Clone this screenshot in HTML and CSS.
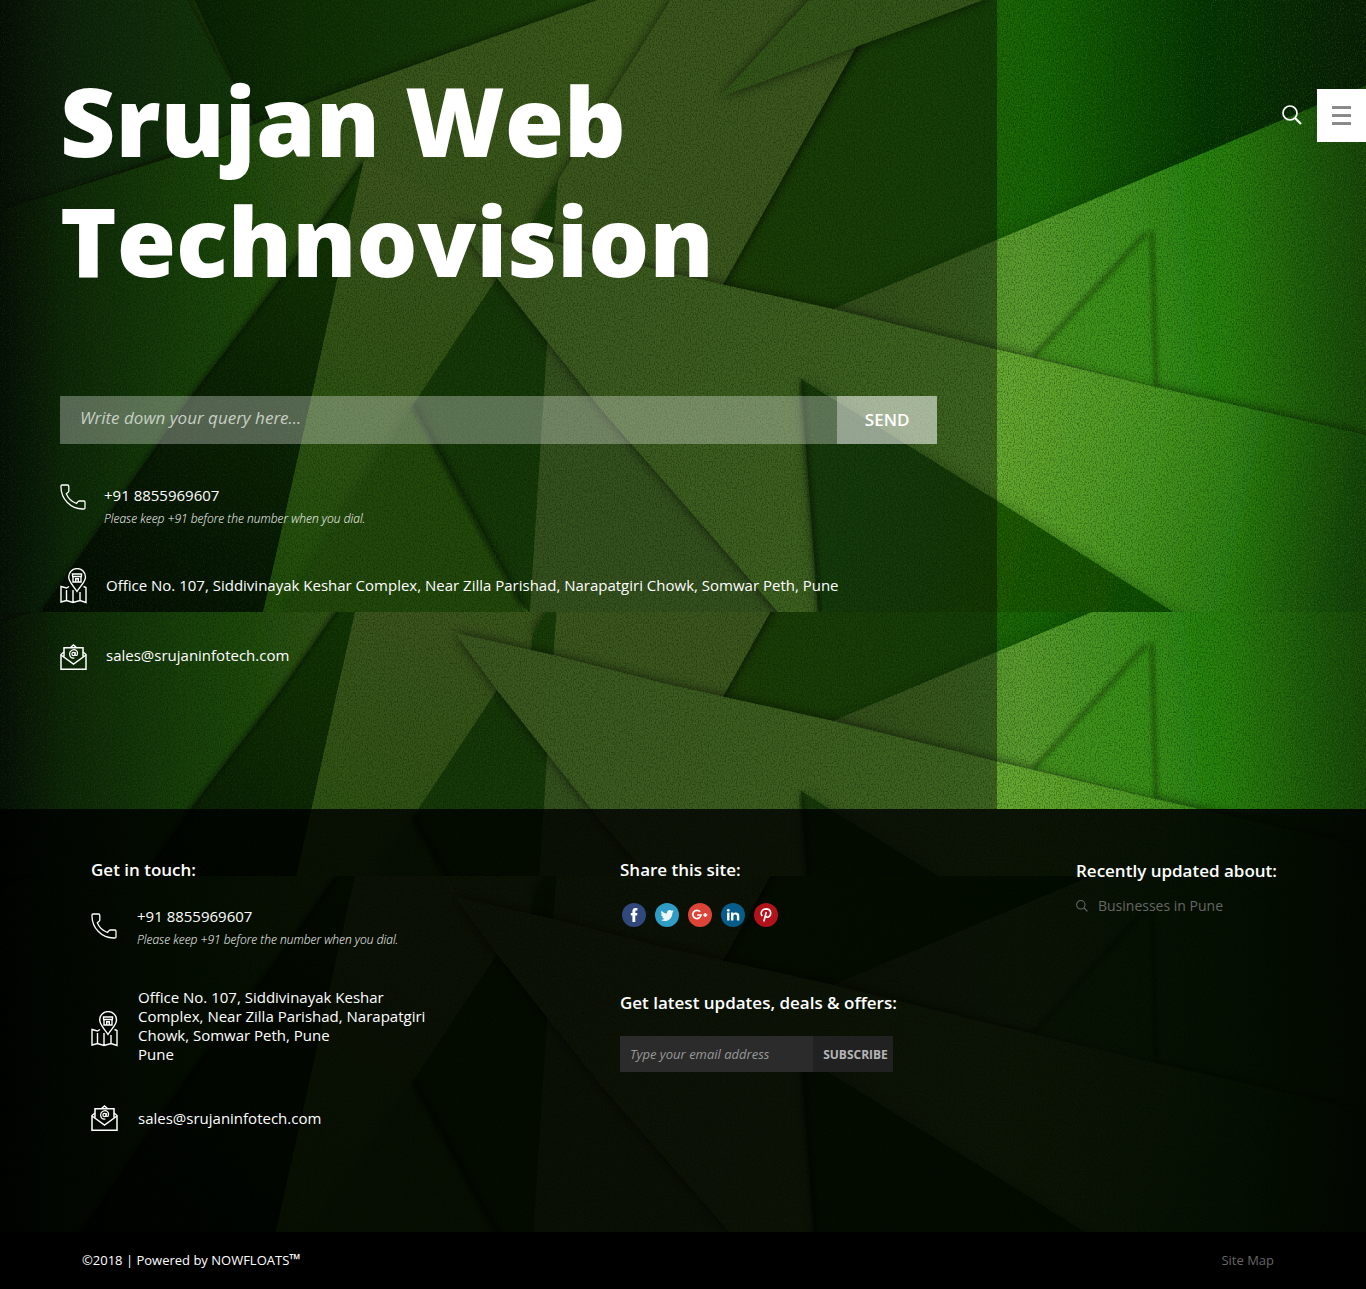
FILE: index.html
```html
<!DOCTYPE html>
<html lang="en">
<head>
<meta charset="utf-8">
<meta name="viewport" content="width=device-width, initial-scale=1">
<title>Srujan Web Technovision</title>
<link rel="stylesheet" href="styles.css">
</head>
<body>
<svg class="backdrop" viewBox="0 0 1366 1289" preserveAspectRatio="xMidYMin slice" aria-hidden="true">
  <defs>
    <filter id="shade" x="-20%" y="-20%" width="140%" height="140%">
      <feDropShadow dx="0" dy="0" stdDeviation="6" flood-color="#041000" flood-opacity=".75"/>
    </filter>
    <filter id="haze" x="-20%" y="-20%" width="140%" height="140%">
      <feDropShadow dx="0" dy="0" stdDeviation="7" flood-color="#062000" flood-opacity=".4"/>
    </filter>
    <filter id="soft"><feGaussianBlur stdDeviation="2"/></filter>
    <filter id="grain" x="0" y="0" width="100%" height="100%" color-interpolation-filters="sRGB">
      <feTurbulence type="fractalNoise" baseFrequency=".83 .57" numOctaves="2" seed="4"/>
      <feColorMatrix values="0 0 0 0 0  0 0 0 0 .1  0 0 0 0 0  3 0 0 0 -1.25"/>
    </filter>
    <filter id="glint" x="0" y="0" width="100%" height="100%" color-interpolation-filters="sRGB">
      <feTurbulence type="fractalNoise" baseFrequency=".87 .59" numOctaves="2" seed="19"/>
      <feColorMatrix values="0 0 0 0 .45  0 0 0 0 .7  0 0 0 0 .15  3 0 0 0 -1.5"/>
    </filter>
    <linearGradient id="topLeft"><stop offset="0" stop-color="#1a5414"/><stop offset="1" stop-color="#1c5c10"/></linearGradient>
    <linearGradient id="topDark"><stop offset="0" stop-color="#083800"/><stop offset="1" stop-color="#2c700a"/></linearGradient>
    <linearGradient id="meadow" gradientUnits="userSpaceOnUse" x1="0" y1="300" x2="700" y2="200"><stop offset="0" stop-color="#186212"/><stop offset=".35" stop-color="#2f800c"/><stop offset=".55" stop-color="#5e8c2a"/><stop offset="1" stop-color="#64962c"/></linearGradient>
    <linearGradient id="strip" gradientUnits="userSpaceOnUse" x1="450" y1="200" x2="330" y2="612"><stop offset="0" stop-color="#648e2e"/><stop offset="1" stop-color="#34840c"/></linearGradient>
    <linearGradient id="sliver" gradientUnits="userSpaceOnUse" x1="340" y1="170" x2="150" y2="612"><stop offset="0" stop-color="#1a5800"/><stop offset="1" stop-color="#021c00"/></linearGradient>
    <linearGradient id="east" gradientUnits="userSpaceOnUse" x1="720" y1="100" x2="1366" y2="100"><stop offset="0" stop-color="#286205"/><stop offset=".4" stop-color="#1e6407"/><stop offset=".5" stop-color="#146404"/><stop offset=".75" stop-color="#043402"/><stop offset="1" stop-color="#0b2808"/></linearGradient>
    <linearGradient id="glade" gradientUnits="userSpaceOnUse" x1="800" y1="500" x2="1180" y2="600"><stop offset="0" stop-color="#205c08"/><stop offset=".5" stop-color="#1c5806"/><stop offset="1" stop-color="#0c4a00"/></linearGradient>
    <linearGradient id="lawn" gradientUnits="userSpaceOnUse" x1="840" y1="300" x2="1366" y2="260"><stop offset="0" stop-color="#56822a"/><stop offset=".35" stop-color="#5a9c2e"/><stop offset=".55" stop-color="#3e921e"/><stop offset=".68" stop-color="#288410"/><stop offset="1" stop-color="#226410"/></linearGradient>
    <linearGradient id="blade" gradientUnits="userSpaceOnUse" x1="460" y1="300" x2="1366" y2="520"><stop offset="0" stop-color="#629032"/><stop offset=".6" stop-color="#66a830"/><stop offset=".75" stop-color="#4a9822"/><stop offset=".88" stop-color="#287c10"/><stop offset="1" stop-color="#1c5c0a"/></linearGradient>
    <linearGradient id="edges"><stop offset="0" stop-color="#000" stop-opacity=".8"/><stop offset=".05" stop-color="#000" stop-opacity=".4"/><stop offset=".13" stop-color="#000" stop-opacity=".15"/><stop offset=".22" stop-color="#000" stop-opacity="0"/><stop offset=".9" stop-color="#000" stop-opacity="0"/><stop offset="1" stop-color="#000" stop-opacity=".3"/></linearGradient>
    <clipPath id="frame"><rect width="1366" height="613"/></clipPath>
    <clipPath id="below"><rect y="200" width="1366" height="413"/></clipPath>
    <g id="grass" clip-path="url(#frame)">
      <rect width="1366" height="613" fill="url(#east)"/>
      <path d="M185-20 600-20V0L254 125Z" fill="url(#topDark)"/>
      <path d="M-30-20H176L254 125-30 222Z" fill="url(#topLeft)" filter="url(#shade)"/>
      <path d="M833 309 999 239 1313 107 1400 72V450Z" fill="url(#lawn)" filter="url(#haze)"/>
      <path d="M-30 220 176 156 308 103 598 0 680-30H900L856 47 717 283 833 640H-30Z" fill="url(#meadow)" filter="url(#shade)"/>
      <path d="M674-5 609 99 533 221 553 243 720 290 856 47 880-10Z" fill="#62902e" filter="url(#shade)"/>
      <path d="M558 180 533 221 530 245 553 246Z" fill="#246008"/>
      <path d="M809 0 720 97 983 0 1000-30H820Z" fill="#548e28" filter="url(#shade)"/>
      <path d="M364 160 279 281 192 395 40 613H263L312 395 337 281Z" fill="url(#sliver)"/>
      <path d="M364 160 279 281 192 395 40 613" fill="none" stroke="#041800" stroke-width="4" opacity=".6" filter="url(#soft)"/>
      <path d="M364 160 337 281 312 395 263 613H286L413 405 530 240Z" fill="url(#strip)"/>
      <path d="M497 278 413 405 522 605 530 613 548 340Z" fill="#1f5a08"/>
      <path d="M413 405 283 613H527Z" fill="#347610" filter="url(#haze)"/>
      <path d="M413 405 522 605" fill="none" stroke="#041800" stroke-width="5" opacity=".6" filter="url(#soft)"/>
      <path d="M548 330 530 613H790L660 440Z" fill="#568630"/>
      <path d="M455 221 553 243 666 272 833 309 999 350 1155 387 1400 443V640H802L740 568 600 408 497 278Z" fill="url(#blade)" filter="url(#shade)"/>
      <path d="M801 379 820 640H1215L1175 613 999 502Z" fill="url(#glade)" filter="url(#haze)"/>
      <path d="M801 381 820 613" fill="none" stroke="#041800" stroke-width="5" opacity=".5" filter="url(#soft)"/>
      <path d="M1150 231 1036 356 1154 386Z" fill="#348e12" opacity=".5"/>
      <path d="M1146 233 1034 356M1152 231 1156 386" fill="none" stroke="#123c05" stroke-width="4" opacity=".7" filter="url(#soft)"/>
      <rect width="1366" height="613" fill="url(#edges)"/>
      <rect width="1366" height="613" filter="url(#grain)" opacity=".35"/>
      <rect width="1366" height="613" filter="url(#glint)" opacity=".2"/>
    </g>
  </defs>
  <use href="#grass"/>
  <g transform="translate(0 412)"><use href="#grass" clip-path="url(#below)"/></g>
  <g transform="translate(0 676)"><use href="#grass" clip-path="url(#below)"/></g>
</svg>

<svg class="sprite" aria-hidden="true">
  <symbol id="i-phone" viewBox="0 0 26 26"><path d="M2 1H7.500Q8.800 1 8.800 2.500V7Q8.800 8 7.800 8.500L6.300 9.800C8 14 12 18 16.500 19.500L18 17.600Q18.500 17 19.500 17H24Q25 17 25 18.300V24Q25 25 23.500 25C11 25.500.5 15 1 2Q1 1 2 1Z" fill="none" stroke="currentColor" stroke-width="1.300"/></symbol>
  <symbol id="i-map" viewBox="0 0 27 36"><g fill="none" stroke="currentColor" stroke-width="1.400"><path d="M17 23.500C14 18.500 8.700 14 8.700 9A8.400 8.400 0 0 1 25.500 9C25.500 14 20 18.500 17 23.500Z"/><path d="M12.500 8V6H21.500V8M12 8.500H22M13 9V14H21V9M15.700 14V10.800H18.300V14"/><path d="M9 18.500 6.500 20 1 18.500V34L6.500 32.500 13 34.500 20 32.500 26 34.500V19.500L23.500 18.500M6.500 22V32M13 22V34M20 24V32"/></g></symbol>
  <symbol id="i-mail" viewBox="0 0 27 27"><g fill="none" stroke="currentColor" stroke-width="1.500"><path d="M4 8 1 10.500V25.200H26V10.500L23 8"/><path d="M1 11 13.500 20 26 11M4 12.500V3.800H23V12.500M10.500 3.500 13.500 1 16.500 3.500"/></g><g fill="none" stroke="currentColor" stroke-width="1.200"><circle cx="13.500" cy="10" r="1.600"/><path d="M15.200 8V10.500Q15.500 12 17 11.200C19 7 15 5 12.500 6 8 8 9 15 14.500 14"/></g></symbol>
  <symbol id="i-search" viewBox="0 0 20 20"><g fill="none" stroke="currentColor"><circle cx="8" cy="8" r="7" stroke-width="1.700"/><path d="M13 13 19 19" stroke-width="2.200"/></g></symbol>
</svg>

<nav class="tools" aria-label="Site tools">
  <button class="tool-search" type="button" aria-label="Search"><svg><use href="#i-search"/></svg></button>
  <button class="tool-menu" type="button" aria-label="Menu"><i></i><i></i><i></i></button>
</nav>

<main class="hero">
  <h1 class="title">Srujan Web Technovision</h1>
  <form class="query">
    <input class="query-text" type="text" aria-label="Your query" placeholder="Write down your query here...">
    <button class="query-send" type="button">SEND</button>
  </form>
  <ul class="contacts">
    <li class="contact">
      <svg class="icon phone"><use href="#i-phone"/></svg>
      <div><p>+91 8855969607</p><p class="note">Please keep +91 before the number when you dial.</p></div>
    </li>
    <li class="contact">
      <svg class="icon map"><use href="#i-map"/></svg>
      <p>Office No. 107, Siddivinayak Keshar Complex, Near Zilla Parishad, Narapatgiri Chowk, Somwar Peth, Pune</p>
    </li>
    <li class="contact">
      <svg class="icon mail"><use href="#i-mail"/></svg>
      <a href="mailto:sales@srujaninfotech.com">sales@srujaninfotech.com</a>
    </li>
  </ul>
</main>

<footer class="footer">
  <div class="columns">
    <section class="touch">
      <h2>Get in touch:</h2>
      <ul class="contacts">
        <li class="contact">
          <svg class="icon phone"><use href="#i-phone"/></svg>
          <div><p>+91 8855969607</p><p class="note">Please keep +91 before the number when you dial.</p></div>
        </li>
        <li class="contact">
          <svg class="icon map"><use href="#i-map"/></svg>
          <p class="address">Office No. 107, Siddivinayak Keshar Complex, Near Zilla Parishad, Narapatgiri Chowk, Somwar Peth, Pune<br>Pune</p>
        </li>
        <li class="contact">
          <svg class="icon mail"><use href="#i-mail"/></svg>
          <a href="mailto:sales@srujaninfotech.com">sales@srujaninfotech.com</a>
        </li>
      </ul>
    </section>
    <section class="share">
      <h2>Share this site:</h2>
      <div class="social">
        <a href="#facebook" aria-label="Facebook"><svg viewBox="0 0 24 24"><circle cx="12" cy="12" r="12" fill="#30487b"/><path d="M10.400 19V12.500H8.800V10H10.400V8.300C10.400 6.200 11.500 5 13.500 5H15.400V7.600H14.200C13.500 7.600 13.300 7.900 13.300 8.600V10H15.400L15.100 12.500H13.300V19Z" fill="#fff"/></svg></a>
        <a href="#twitter" aria-label="Twitter"><svg viewBox="0 0 24 24"><circle cx="12" cy="12" r="12" fill="#2f9dc6"/><path d="M18.800 8.300 17.400 9.700C17.500 14.500 14 18 9.700 18 8.300 18 7 17.600 5.900 16.900 7.300 17 8.700 16.600 9.700 15.800 8.500 15.700 7.500 15 7.200 13.900H8.300C7 13.600 6.100 12.500 6.100 11.200L7.300 11.500C6.100 10.600 5.800 9.100 6.500 7.800 7.900 9.400 9.800 10.400 12 10.500 11.600 8.500 13 6.900 14.800 6.900 15.600 6.900 16.300 7.200 16.800 7.700L18.500 7.100 17.500 8.500Z" fill="#eef6fa"/></svg></a>
        <a href="#google" aria-label="Google Plus"><svg viewBox="0 0 24 24"><circle cx="12" cy="12" r="12" fill="#dc4437"/><path d="M12.100 8.800A4.100 4.100 0 1 0 13 12H9.200M17.300 10V14M15.300 12H19.300" fill="none" stroke="#fff" stroke-width="1.700"/></svg></a>
        <a href="#linkedin" aria-label="LinkedIn"><svg viewBox="0 0 24 24"><circle cx="12" cy="12" r="12" fill="#075c8b"/><circle cx="7.300" cy="7.300" r="1.400" fill="#fff"/><path d="M6.100 9.600H8.500V17.500H6.100ZM10 9.600H12.300V10.700C13.600 8.700 18.300 8.900 18.300 12.800V17.500H15.900V13.300C15.900 10.700 12.400 10.900 12.400 13.300V17.500H10Z" fill="#fff"/></svg></a>
        <a href="#pinterest" aria-label="Pinterest"><svg viewBox="0 0 24 24"><circle cx="12" cy="12" r="12" fill="#b2121a"/><path d="M8.300 13C6.300 11 7 6 12 5.900 17 6 17.500 10.500 15.700 12.900 14 15 11.800 14.200 11.400 12.800M12.300 9 9.800 18.500" fill="none" stroke="#fff" stroke-width="1.600"/></svg></a>
      </div>
      <h2><label for="email">Get latest updates, deals &amp; offers:</label></h2>
      <form class="subscribe">
        <input id="email" type="email" placeholder="Type your email address">
        <button type="button">SUBSCRIBE</button>
      </form>
    </section>
    <section class="recent">
      <h2>Recently updated about:</h2>
      <a href="#pune"><svg><use href="#i-search"/></svg>Businesses in Pune</a>
    </section>
  </div>
  <div class="legal">
    <p>©2018 | Powered by NOWFLOATS<b>™</b></p>
    <a href="#sitemap">Site Map</a>
  </div>
</footer>
</body>
</html>
```
FILE: styles.css
```css
* { box-sizing: border-box; }

body {
  position: relative;
  margin: 0;
  background: #000;
  color: #fff;
  font: 15px/20px "Open Sans", "Noto Sans", sans-serif;
}

h1, h2, p, ul { margin: 0; padding: 0; }
ul { list-style: none; }
a { color: inherit; text-decoration: none; }
button, input { border: 0; border-radius: 0; margin: 0; font-family: inherit; color: inherit; }
button { cursor: pointer; padding: 0; }

.sprite { position: absolute; width: 0; height: 0; }

/* grass artwork behind the whole page */
.backdrop {
  position: absolute;
  inset: 0;
  z-index: -1;
  width: 100%;
  height: 100%;
}

/* search and menu buttons pinned over the right edge */
.tools {
  position: absolute;
  top: 89px;
  right: 0;
  display: flex;
  align-items: center;
}
.tool-search { width: 50px; height: 52px; padding-bottom: 2px; background: none; }
.tool-search svg { display: block; width: 20px; height: 20px; margin-left: 15px; }
.tool-menu {
  display: flex;
  flex-direction: column;
  align-items: center;
  justify-content: center;
  gap: 5px;
  width: 49px;
  height: 53px;
  background: #fff;
}
.tool-menu i { width: 19px; height: 3px; background: #8a8a8a; }

.hero {
  width: 73%;
  padding: 60px 60px 138px;
  background: rgba(8, 8, 6, .42);
}
.title {
  margin-bottom: 96px;
  font-size: 96px;
  line-height: 120px;
  font-weight: 800;
}

.query { display: flex; height: 48px; margin-bottom: 40px; }
.query-text {
  flex: 1;
  min-width: 0;
  padding: 0 20px 6px;
  background: rgba(255, 255, 255, .3);
  font-size: 17px;
  font-style: italic;
}
.query-text::placeholder { color: #c8cfc4; opacity: 1; }
.query-send {
  width: 100px;
  padding-bottom: 2px;
  background: rgba(255, 255, 255, .55);
  font-size: 17px;
  font-weight: 600;
}

.contact { display: flex; align-items: center; }
.contact .icon { flex: none; }
.icon.phone { width: 26px; height: 26px; }
.icon.map { width: 27px; height: 36px; }
.icon.mail { width: 27px; height: 27px; }
.contact .note { font-size: 12px; font-style: italic; font-weight: 300; }

.hero .contacts { display: grid; gap: 40px; }
.hero .contact { gap: 19px; }
.hero .contact p { padding-bottom: 2px; }
.hero .contact:first-child { gap: 18px; height: 44px; align-items: flex-start; }
.hero .contact:first-child p { padding: 0; line-height: 23px; }
.hero .contact:last-child { align-items: flex-start; line-height: 23px; }

.footer { background: rgba(0, 0, 0, .88); }
.columns {
  display: grid;
  grid-template-columns: 529fr 456fr 201fr;
  padding: 51px 89px 100px 91px;
}
h2 { font-size: 17px; line-height: 20px; font-weight: 600; white-space: nowrap; }

.touch { max-width: 347px; }
.touch h2 { margin-bottom: 24px; }
.touch .contacts { display: grid; gap: 36px; }
.touch .contact { gap: 20px; line-height: 19px; }
.touch .contact:first-child p { line-height: 24px; }
.touch .phone { margin-bottom: 4px; }
.address { padding-bottom: 5px; }

.share h2 { margin-bottom: 23px; }
.social { display: flex; gap: 9px; margin: 0 0 66px 2px; }
.social svg { display: block; width: 24px; height: 24px; }
.subscribe { display: flex; height: 36px; }
.subscribe input {
  width: 193px;
  padding: 0 10px;
  background: #2b2b2b;
  font-size: 13px;
  font-style: italic;
}
.subscribe input::placeholder { color: #999; opacity: 1; }
.subscribe button {
  width: 80px;
  padding-left: 5px;
  background: #212121;
  color: #b5b5b5;
  font-size: 12px;
  font-weight: 700;
}

.recent h2 { margin: 1px 0 15px; }
.recent a { display: flex; align-items: center; gap: 10px; font-size: 14px; color: #666; }
.recent svg { width: 12px; height: 12px; }

.legal {
  display: flex;
  justify-content: space-between;
  align-items: center;
  height: 57px;
  padding: 0 92px 2px 82px;
  background: #000;
  font-size: 13px;
}
.legal b { font-size: 15px; line-height: 1; }
.legal a { color: #666; }
```
